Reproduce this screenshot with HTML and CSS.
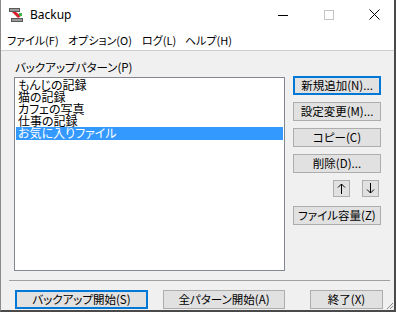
FILE: index.html
```html
<!DOCTYPE html>
<html lang="ja">
<head>
<meta charset="UTF-8">
<title>Backup</title>
<link rel="stylesheet" href="styles.css">
</head>
<body>
<div class="window">
    <div class="titlebar">
        <svg class="app-icon" width="16" height="16" viewBox="0 0 16 16">
            <rect x="1" y="1" width="11" height="4" fill="#5a5a5a"/>
            <rect x="2" y="2" width="9" height="2" fill="#9a9a9a"/>
            <rect x="3" y="11" width="12" height="4" fill="#5a5a5a"/>
            <rect x="4" y="12" width="10" height="2" fill="#9a9a9a"/>
            <path d="M4 5 L10 11 L13 9 L8 5 Z" fill="#d81e2a"/>
            <rect x="11" y="6" width="3" height="3" fill="#3bb54a"/>
        </svg>
        <span class="title">Backup</span>
        <div class="controls">
            <svg class="ctl-min" width="10" height="10" viewBox="0 0 10 10"><line x1="0" y1="5.5" x2="10" y2="5.5" stroke="#000" stroke-width="1"/></svg>
            <svg class="ctl-max" width="10" height="10" viewBox="0 0 10 10"><rect x="0.5" y="0.5" width="9" height="9" fill="none" stroke="#c4c4c4"/></svg>
            <svg class="ctl-close" width="11" height="11" viewBox="0 0 11 11"><path d="M0.5 0.5 L10.5 10.5 M10.5 0.5 L0.5 10.5" stroke="#000" stroke-width="1"/></svg>
        </div>
    </div>
    <div class="menubar">
        <span class="menu m1">ファイル(F)</span>
        <span class="menu m2">オプション(O)</span>
        <span class="menu m3">ログ(L)</span>
        <span class="menu m4">ヘルプ(H)</span>
    </div>
    <div class="client">
        <div class="main">
            <div class="list-col">
                <div class="label">バックアップパターン(P)</div>
                <div class="listbox">
                    <div class="item">もんじの記録</div>
                    <div class="item">猫の記録</div>
                    <div class="item">カフェの写真</div>
                    <div class="item">仕事の記録</div>
                    <div class="item selected">お気に入りファイル</div>
                </div>
            </div>
            <div class="side">
                <button class="btn default">新規追加(N)...</button>
                <button class="btn">設定変更(M)...</button>
                <button class="btn">コピー(C)</button>
                <button class="btn">削除(D)...</button>
                <div class="arrows">
                    <button class="btn arrow" aria-label="上へ">
                        <svg width="9" height="11" viewBox="0 0 9 11"><path d="M4.5 1 V11 M1 4.5 L4.5 1 L8 4.5" fill="none" stroke="#000" stroke-width="1"/></svg>
                    </button>
                    <button class="btn arrow" aria-label="下へ">
                        <svg width="9" height="11" viewBox="0 0 9 11"><path d="M4.5 0 V10 M1 6.5 L4.5 10 L8 6.5" fill="none" stroke="#000" stroke-width="1"/></svg>
                    </button>
                </div>
                <button class="btn">ファイル容量(Z)</button>
            </div>
        </div>
        <div class="separator"></div>
        <div class="bottom">
            <button class="btn default b-start">バックアップ開始(S)</button>
            <button class="btn b-all">全パターン開始(A)</button>
            <button class="btn b-exit">終了(X)</button>
        </div>
        <svg class="grip" width="8" height="8" viewBox="0 0 8 8">
            <path d="M7 1 L1 7 M7 4 L4 7" stroke="#8a8a8a" stroke-width="1"/>
        </svg>
    </div>
</div>
</body>
</html>
```

FILE: styles.css
```css
body {
    margin: 0;
    padding: 0;
    font-family: "Noto Sans CJK JP", "Noto Sans", sans-serif;
    font-size: 12px;
    font-feature-settings: "palt";
    color: #000;
}
.window {
    width: 396px;
    height: 312px;
    box-sizing: border-box;
    border-left: 1px solid #8a8a8a;
    border-right: 2px solid #4a4a4a;
    border-bottom: 2px solid #4a4a4a;
    display: flex;
    flex-direction: column;
    background-color: #fff;
}
.titlebar {
    height: 30px;
    display: flex;
    align-items: center;
    flex-shrink: 0;
}
.app-icon {
    margin-left: 7px;
    margin-top: -1px;
}
.title {
    margin-left: 6px;
    font-family: "Noto Sans", sans-serif;
    font-size: 12px;
    margin-top: -1px;
}
.controls {
    margin-left: auto;
    margin-right: 14px;
    display: flex;
    align-items: center;
    margin-top: -1px;
}
.ctl-max { margin-left: 36px; }
.ctl-close { margin-left: 35px; }

.menubar {
    height: 20px;
    display: flex;
    align-items: center;
    border-bottom: 1px solid #cfcfcf;
    flex-shrink: 0;
}
.menu {
    white-space: nowrap;
    line-height: 20px;
    font-size: 11px;
}
.m1 { margin-left: 6px; width: 61px; }
.m2 { width: 74px; }
.m3 { width: 43px; }

.client {
    flex: 1;
    background-color: #f0f0f0;
    padding: 9px 0 0 13px;
    display: flex;
    flex-direction: column;
    position: relative;
}
.main {
    display: flex;
    gap: 8px;
}
.label {
    height: 15px;
    line-height: 15px;
    margin-bottom: 2px;
    padding-left: 1px;
    font-size: 11.5px;
}
.listbox {
    width: 271px;
    height: 194px;
    box-sizing: border-box;
    border: 1px solid #828790;
    background-color: #fff;
    padding: 1px 1px 0 1px;
}
.item {
    height: 12px;
    line-height: 12px;
    padding-left: 2px;
    white-space: nowrap;
}
.item.selected {
    background-color: #3399ff;
    color: #fff;
    height: 13px;
}
.side {
    width: 88px;
    padding-top: 16px;
    display: flex;
    flex-direction: column;
}
.btn {
    font-family: "Noto Sans CJK JP", "Noto Sans", sans-serif;
    font-size: 11.5px;
    font-feature-settings: "palt";
    height: 19px;
    line-height: 15px;
    padding: 0;
    margin: 0 0 7px 0;
    box-sizing: border-box;
    background-color: #e1e1e1;
    border: 1px solid #adadad;
    color: #000;
    white-space: nowrap;
}
.btn.default {
    border: 2px solid #0078d7;
    line-height: 13px;
}
.arrows {
    display: flex;
    justify-content: flex-end;
    gap: 12px;
    padding-right: 2px;
    margin-bottom: 3px;
}
.btn.arrow {
    width: 17px;
    height: 17px;
    margin: 0 0 6px 0;
    display: flex;
    align-items: center;
    justify-content: center;
}
.separator {
    height: 1px;
    background-color: #a0a0a0;
    margin: 9px 4px 0 -5px;
}
.bottom {
    display: flex;
    margin-top: 9px;
    padding-left: 1px;
}
.bottom .btn {
    margin: 0;
}
.b-start { width: 133px; }
.b-all { width: 122px; margin-left: 15px !important; }
.b-exit { width: 73px; margin-left: 25px !important; }
.grip {
    position: absolute;
    right: 0;
    bottom: 0;
}
```
